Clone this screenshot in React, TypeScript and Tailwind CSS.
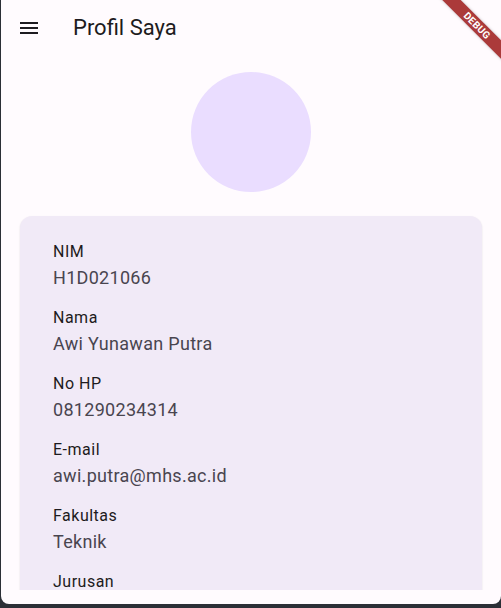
import React from 'react'

const fields = [
  { label: 'NIM', value: 'H1D021066' },
  { label: 'Nama', value: 'Awi Yunawan Putra' },
  { label: 'No HP', value: '081290234314' },
  { label: 'E-mail', value: 'awi.putra@mhs.ac.id' },
  { label: 'Fakultas', value: 'Teknik' },
]

function MenuIcon() {
  return (
    <svg width="24" height="24" viewBox="0 0 24 24" fill="#1d1b20">
      <path d="M3 18h18v-2H3v2zm0-5h18v-2H3v2zm0-7v2h18V6H3z" />
    </svg>
  )
}

export default function App() {
  return (
    <div className="w-[501px] h-[608px] bg-[#2b2f36] overflow-hidden font-['Roboto',sans-serif]">
      <div className="relative ml-px h-[604px] bg-[#fffbfe] rounded-b-[8px] flex flex-col overflow-hidden">
        {/* App bar */}
        <div className="h-14 shrink-0 flex items-center">
          <div className="ml-4 w-6 h-6 flex items-center justify-center">
            <MenuIcon />
          </div>
          <h1 className="ml-8 text-[22px] leading-7 text-[#1d1b20]">Profil Saya</h1>
        </div>

        {/* Body */}
        <div className="h-[534px] overflow-hidden px-[15px]">
          <div className="flex justify-center mt-4">
            <div className="w-[120px] h-[120px] rounded-full bg-[#eaddff]" />
          </div>
          <div className="mx-1 mt-6 rounded-xl bg-[#f1eaf7] shadow-[0_1px_2px_rgba(0,0,0,0.12)] pt-4 pl-[33px] pb-4">
            {fields.map((f) => (
              <div key={f.label} className="pt-2 pb-[7px]">
                <div className="text-base leading-6 tracking-[0.5px] text-[#1d1b20]">{f.label}</div>
                <div className="pt-px text-[18px] leading-[26px] tracking-[0.3px] text-[#49454f]">{f.value}</div>
              </div>
            ))}
            <div className="pt-2">
              <div className="text-base leading-6 tracking-[0.5px] text-[#1d1b20]">Jurusan</div>
              <div className="h-10" />
            </div>
          </div>
        </div>

        {/* Debug banner */}
        <div className="absolute top-[19px] right-[-31px] w-[110px] h-[13px] rotate-45 bg-[#ab3a3a] shadow-[0_0_3px_rgba(0,0,0,0.25)] flex items-center justify-center">
          <span className="text-[10px] leading-none font-bold tracking-[0.2px] text-white">DEBUG</span>
        </div>
      </div>
    </div>
  )
}
